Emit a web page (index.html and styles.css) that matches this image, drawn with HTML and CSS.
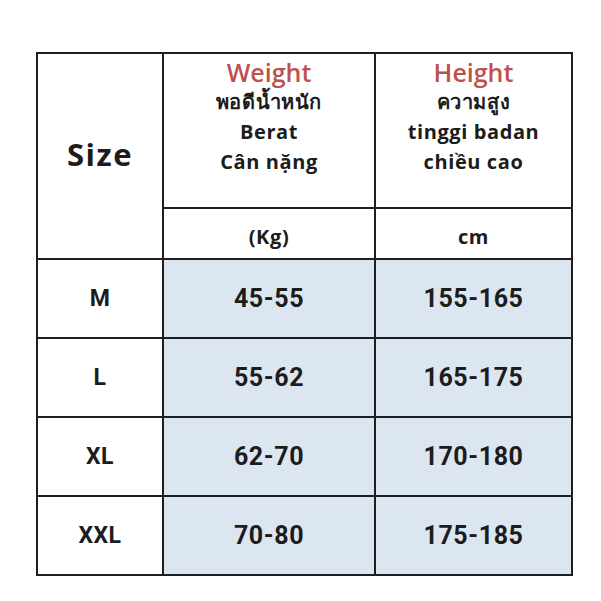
FILE: index.html
```html
<!DOCTYPE html>
<html>
<head>
<meta charset="utf-8">
<link rel="stylesheet" href="styles.css">
</head>
<body>
<div class="chart">
  <div class="cell size-head">Size</div>
  <div class="cell head">
    <div class="title">Weight</div>
    <div class="sub">พอดีน้ำหนัก</div>
    <div class="sub">Berat</div>
    <div class="sub">Cân nặng</div>
  </div>
  <div class="cell head">
    <div class="title">Height</div>
    <div class="sub">ความสูง</div>
    <div class="sub">tinggi badan</div>
    <div class="sub">chiều cao</div>
  </div>
  <div class="cell unit">(Kg)</div>
  <div class="cell unit">cm</div>

  <div class="cell label">M</div>
  <div class="cell val">45-55</div>
  <div class="cell val">155-165</div>

  <div class="cell label">L</div>
  <div class="cell val">55-62</div>
  <div class="cell val">165-175</div>

  <div class="cell label">XL</div>
  <div class="cell val">62-70</div>
  <div class="cell val">170-180</div>

  <div class="cell label">XXL</div>
  <div class="cell val">70-80</div>
  <div class="cell val">175-185</div>
</div>
</body>
</html>
```
FILE: styles.css
```css
html, body {
  margin: 0;
  padding: 0;
  background: #ffffff;
}
body {
  padding: 52px 0 0 36px;
  font-family: "Open Sans", "Noto Sans", "DejaVu Sans", sans-serif;
  color: #1c1c1c;
}
.chart {
  display: grid;
  width: 537px;
  box-sizing: border-box;
  grid-template-columns: 124px 210px 195px;
  grid-template-rows: 153px 49px 77px 77px 77px 77px;
  gap: 2px;
  padding: 2px;
  background: #1e1e1e;
}
.cell {
  background: #ffffff;
  display: flex;
  flex-direction: column;
  align-items: center;
  justify-content: center;
  font-weight: 700;
}
.size-head {
  grid-row: 1 / span 2;
  font-size: 31px;
  font-weight: 700;
  letter-spacing: 1.5px;
  padding-bottom: 4px;
}
.head {
  justify-content: flex-start;
  padding-top: 3px;
}
.title {
  color: #c0504d;
  font-size: 25px;
  font-weight: 600;
  line-height: 30px;
}
.sub {
  font-size: 20px;
  font-weight: 700;
  letter-spacing: 0.6px;
  line-height: 30px;
  color: #1c1c1c;
}
.unit {
  font-size: 20px;
  font-weight: 700;
  letter-spacing: 0.6px;
  padding-top: 6px;
  box-sizing: border-box;
}
.label {
  font-size: 23px;
  font-family: "Roboto", sans-serif;
  letter-spacing: 0.5px;
}
.val {
  background: #dce6f1;
  font-family: "Roboto", sans-serif;
  font-size: 25px;
  letter-spacing: 0.6px;
}
```
